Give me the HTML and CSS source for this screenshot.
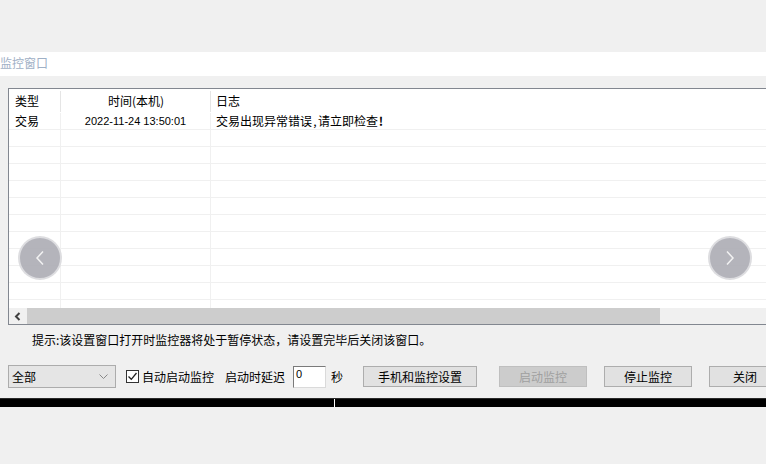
FILE: index.html
```html
<!DOCTYPE html>
<html lang="zh-CN">
<head>
<meta charset="utf-8">
<title>监控窗口</title>
<link rel="stylesheet" href="styles.css">
</head>
<body>
<div class="top-gap"></div>
<div class="titlebar">监控窗口</div>
<div class="main">
  <div class="list">
    <div class="list-head">
      <div class="hc c1">类型</div>
      <div class="hc c2">时间(本机)</div>
      <div class="hc c3">日志</div>
    </div>
    <div class="list-body">
      <div class="row"><div class="c c1">交易</div><div class="c c2 num">2022-11-24 13:50:01</div><div class="c c3">交易出现异常错误<span class="p">,</span>请立即检查<span class="p b">!</span></div></div>
      <div class="row"><div class="c c1"></div><div class="c c2"></div><div class="c c3"></div></div>
      <div class="row"><div class="c c1"></div><div class="c c2"></div><div class="c c3"></div></div>
      <div class="row"><div class="c c1"></div><div class="c c2"></div><div class="c c3"></div></div>
      <div class="row"><div class="c c1"></div><div class="c c2"></div><div class="c c3"></div></div>
      <div class="row"><div class="c c1"></div><div class="c c2"></div><div class="c c3"></div></div>
      <div class="row"><div class="c c1"></div><div class="c c2"></div><div class="c c3"></div></div>
      <div class="row"><div class="c c1"></div><div class="c c2"></div><div class="c c3"></div></div>
      <div class="row"><div class="c c1"></div><div class="c c2"></div><div class="c c3"></div></div>
      <div class="row"><div class="c c1"></div><div class="c c2"></div><div class="c c3"></div></div>
      <div class="row"><div class="c c1"></div><div class="c c2"></div><div class="c c3"></div></div>
      <div class="row"><div class="c c1"></div><div class="c c2"></div><div class="c c3"></div></div>
    </div>
    <div class="hscroll">
      <div class="sbtn"><svg width="8" height="9" viewBox="0 0 8 9"><path d="M5.5 1 L2 4.5 L5.5 8" fill="none" stroke="#404040" stroke-width="2"/></svg></div>
      <div class="thumb"></div>
      <div class="track"></div>
    </div>
    <div class="nav nav-left"><svg width="12" height="16" viewBox="0 0 12 16"><path d="M9 1.5 L3 8 L9 14.5" fill="none" stroke="#f2f2f2" stroke-width="1.5"/></svg></div>
    <div class="nav nav-right"><svg width="12" height="16" viewBox="0 0 12 16"><path d="M3 1.5 L9 8 L3 14.5" fill="none" stroke="#f2f2f2" stroke-width="1.5"/></svg></div>
  </div>
  <div class="tip">提示:该设置窗口打开时监控器将处于暂停状态，请设置完毕后关闭该窗口。</div>
  <div class="controls">
    <div class="select"><span>全部</span><svg width="9" height="6" viewBox="0 0 9 6"><path d="M0.5 0.5 L4.5 4.5 L8.5 0.5" fill="none" stroke="#888" stroke-width="1"/></svg></div>
    <label class="check"><span class="box"><svg width="11" height="11" viewBox="0 0 11 11"><path d="M1.5 5.5 L4.3 8.3 L9.5 2" fill="none" stroke="#222" stroke-width="1.3"/></svg></span>自动启动监控</label>
    <span class="lbl">启动时延迟</span>
    <div class="input">0</div>
    <span class="sec">秒</span>
    <div class="btn b1">手机和监控设置</div>
    <div class="btn b2 disabled">启动监控</div>
    <div class="btn b3">停止监控</div>
    <div class="btn b4">关闭</div>
  </div>
  <div class="blackbar"><div class="seg"></div><div class="seg grow"></div></div>
</div>
</body>
</html>
```
FILE: styles.css
```css
html, body {
  margin: 0;
  padding: 0;
}
body {
  width: 766px;
  height: 464px;
  overflow: hidden;
  background: #f0f0f0;
  font-family: "Noto Sans CJK SC", "Liberation Sans", sans-serif;
  font-size: 12px;
  color: #000;
}
.top-gap {
  height: 52px;
}
.titlebar {
  height: 24px;
  line-height: 22px;
  background: #fff;
  color: #9fb0c6;
}
.main {
  padding-top: 12px;
}
.list {
  position: relative;
  margin-left: 8px;
  width: 770px;
  height: 235px;
  border: 1px solid #828790;
  border-right: none;
  background: #fff;
  display: flex;
  flex-direction: column;
  overflow: hidden;
}
.list-head {
  height: 24px;
  display: flex;
  flex: none;
}
.hc {
  position: relative;
  line-height: 24px;
  box-sizing: border-box;
}
.hc.c1, .c.c1 { width: 52px; padding-left: 6px; flex: none; }
.hc.c2, .c.c2 { width: 150px; text-align: center; flex: none; }
.hc.c3, .c.c3 { flex: 1; padding-left: 5px; }
.hc.c1::after, .hc.c2::after {
  content: "";
  position: absolute;
  right: 0;
  top: 2px;
  bottom: 1px;
  width: 1px;
  background: #e5e5e5;
}
.list-body {
  height: 195px;
  flex: none;
  overflow: hidden;
}
.row {
  display: flex;
  height: 16px;
  border-bottom: 1px solid #f0f0f0;
}
.c {
  box-sizing: border-box;
  line-height: 16px;
  white-space: nowrap;
}
.c.c1, .c.c2 {
  border-right: 1px solid #f0f0f0;
}
.p {
  display: inline-block;
  width: 6px;
  text-align: center;
}
.b {
  font-weight: bold;
}
.num {
  font-family: "Liberation Sans", sans-serif;
  font-size: 11px;
}
.hscroll {
  height: 16px;
  display: flex;
  flex: none;
  background: #f0f0f0;
}
.sbtn {
  width: 18px;
  flex: none;
  display: flex;
  align-items: center;
  justify-content: center;
}
.thumb {
  width: 633px;
  flex: none;
  background: #cdcdcd;
}
.track {
  flex: 1;
}
.nav {
  position: absolute;
  top: 147px;
  width: 40px;
  height: 40px;
  border-radius: 50%;
  border: 2px solid rgba(225, 225, 228, 0.9);
  background: rgba(170, 170, 178, 0.88);
  display: flex;
  align-items: center;
  justify-content: center;
}
.nav-left { left: 9px; }
.nav-right { left: 699px; }
.tip {
  margin-top: 8px;
  padding-left: 32px;
  line-height: 14px;
  height: 14px;
}
.controls {
  margin-top: 18px;
  height: 23px;
  display: flex;
  align-items: center;
  white-space: nowrap;
}
.controls > * {
  flex: none;
}
.select {
  margin-left: 8px;
  width: 96px;
  height: 21px;
  border: 1px solid #acacac;
  background: #e5e5e5;
  display: flex;
  align-items: center;
  justify-content: space-between;
  padding: 0 7px 0 3px;
}
.check {
  margin-left: 10px;
  display: flex;
  align-items: center;
}
.box {
  width: 11px;
  height: 11px;
  border: 1px solid #333;
  background: #fff;
  margin-right: 3px;
  display: flex;
}
.lbl {
  margin-left: 11px;
}
.input {
  margin-left: 8px;
  width: 29px;
  height: 20px;
  padding-left: 2px;
  line-height: 14px;
  border: 1px solid #7a7a7a;
  border-right-color: #dadada;
  border-bottom-color: #dadada;
  background: #fff;
  font-family: "Liberation Sans", sans-serif;
  font-size: 11px;
}
.sec {
  margin-left: 5px;
}
.btn {
  height: 19px;
  border: 1px solid #adadad;
  background: #e1e1e1;
  line-height: 19px;
  text-align: center;
}
.b1 { margin-left: 20px; width: 112px; }
.b2 { margin-left: 22px; width: 86px; }
.b3 { margin-left: 17px; width: 86px; }
.b4 { margin-left: 17px; width: 70px; }
.disabled {
  background: #cccccc;
  border-color: #bfbfbf;
  color: #a0a0a0;
}
.blackbar {
  margin-top: 10px;
  height: 8px;
  border-top: 1px solid #2a2a2a;
  display: flex;
}
.seg {
  width: 334px;
  flex: none;
  background: #000;
  border-right: 1px solid #fff;
}
.seg.grow {
  flex: 1;
  border-right: none;
}
```
